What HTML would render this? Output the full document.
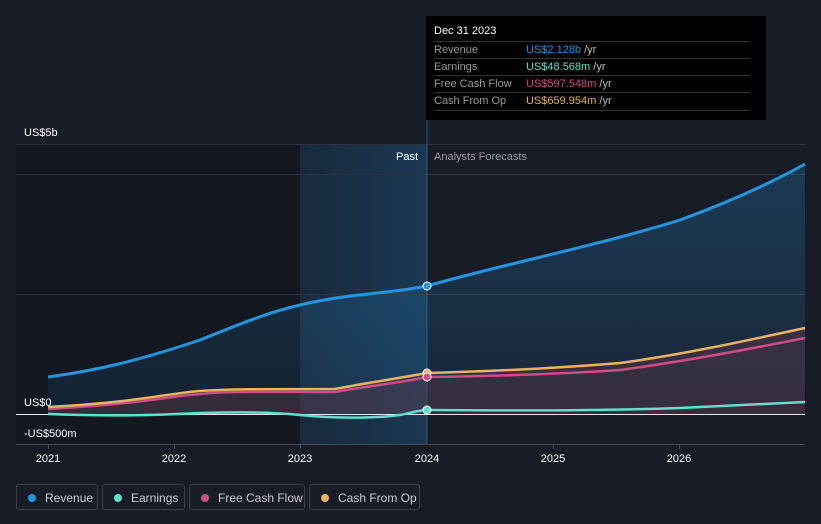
<!DOCTYPE html>
<html><head><style>
body{margin:0;background:#181c27;font-family:"Liberation Sans",sans-serif;}
.wrap{position:relative;width:821px;height:524px;overflow:hidden;background:#181c27;}
svg{position:absolute;left:0;top:0}
.tt{position:absolute;left:426px;top:16px;width:340px;height:104px;background:#000;color:#fff;font-size:11px}
.tt .h{position:absolute;left:8px;top:9px;font-size:11px}
.row{position:absolute;left:8px;width:316px;height:17px;border-top:1px solid #333;line-height:17px;color:#999}
.row span{position:absolute;left:92px}
.row i{font-style:normal;color:#bbb}
.leg{position:absolute;top:484px;height:26px;border:1px solid #3a3f4a;border-radius:3px;color:#ccc;font-size:12px;line-height:26px;box-sizing:border-box}
.leg b{position:absolute;left:11px;top:9px;width:8px;height:8px;border-radius:50%}
.leg span{position:absolute;left:28px}
</style></head><body><div class="wrap">
<svg width="821" height="524">
<defs>
<linearGradient id="pg" x1="0" x2="1"><stop offset="0" stop-color="#182a3d"/><stop offset="1" stop-color="#1a3752"/></linearGradient>
<linearGradient id="ra" x1="0" y1="0" x2="0" y2="1"><stop offset="0" stop-color="#2394df" stop-opacity=".25"/><stop offset="1" stop-color="#2394df" stop-opacity=".08"/></linearGradient>
</defs>
<rect x="16" y="144" width="284" height="300" fill="#13171f"/>
<rect x="300" y="144" width="127" height="300" fill="url(#pg)"/>
<g stroke="#2c313c" stroke-width="1">
<line x1="16" y1="144.5" x2="805" y2="144.5"/>
<line x1="16" y1="174.5" x2="805" y2="174.5"/>
<line x1="16" y1="294.5" x2="805" y2="294.5"/>
<line x1="16" y1="444.5" x2="805" y2="444.5" stroke="#444a55"/>
</g>
<line x1="427" y1="16" x2="427" y2="444" stroke="#2a5478" stroke-width="1"/>
<path d="M48,377 C100,370 140,360 200,340 C250,320 270,312 300,305 C350,293 380,295 427,286 C500,265 600,245 680,220 C740,198 780,178 805,164 L805,414 L48,414Z" fill="url(#ra)"/>
<path d="M48,407 C140,402 200,391 260,389 L335,389 C360,384 400,378 427,373 C500,371 560,368 620,363 C680,355 740,342 805,328 L805,414 L48,414Z" fill="#5a3848" fill-opacity=".45"/>
<line x1="16" y1="414.5" x2="805" y2="414.5" stroke="#e8e8e8" stroke-width="1"/>
<path d="M48,377 C100,370 140,360 200,340 C250,320 270,312 300,305 C350,293 380,295 427,286 C500,265 600,245 680,220 C740,198 780,178 805,164" fill="none" stroke="#2394df" stroke-width="3"/>
<path d="M48,409 C140,404 170,396 200,394 C230,391 260,392 335,392 C360,387 400,383 427,377 C500,376 560,374 620,370 C680,362 740,351 805,338" fill="none" stroke="#d04a86" stroke-width="2.5"/>
<path d="M48,407 C140,402 170,393 200,391 C230,389 260,389 335,389 C360,384 400,378 427,373 C500,371 560,368 620,363 C680,355 740,342 805,328" fill="none" stroke="#e9b260" stroke-width="2.5"/>
<path d="M48,414 C100,416 140,416 200,413 C240,412 270,412 300,415 C330,418 370,419 400,415 C415,412 420,410 427,410 C560,411 620,410 680,408 C740,405 780,403 805,402" fill="none" stroke="#5ee0cd" stroke-width="2.5"/>
<circle cx="427" cy="286" r="4" fill="#2394df" stroke="#fff" stroke-width="1"/>
<circle cx="427" cy="373" r="4" fill="#e9b260" stroke="#fff" stroke-width="1"/>
<circle cx="427" cy="377" r="4" fill="#d04a86" stroke="#fff" stroke-width="1"/>
<circle cx="427" cy="410" r="4" fill="#5ee0cd" stroke="#fff" stroke-width="1"/>
<g font-family="Liberation Sans" font-size="11" fill="#fff">
<text x="24" y="136">US$5b</text>
<text x="24" y="406">US$0</text>
<text x="24" y="437">-US$500m</text>
<text x="418" y="160" text-anchor="end">Past</text>
<text x="434" y="160" fill="#999">Analysts Forecasts</text>
<text x="48" y="462" text-anchor="middle">2021</text>
<text x="174" y="462" text-anchor="middle">2022</text>
<text x="300" y="462" text-anchor="middle">2023</text>
<text x="427" y="462" text-anchor="middle">2024</text>
<text x="553" y="462" text-anchor="middle">2025</text>
<text x="679" y="462" text-anchor="middle">2026</text>
</g>
<g stroke="#444a55"><line x1="48.5" y1="444" x2="48.5" y2="449"/><line x1="174.5" y1="444" x2="174.5" y2="449"/><line x1="300.5" y1="444" x2="300.5" y2="449"/><line x1="553.5" y1="444" x2="553.5" y2="449"/><line x1="679.5" y1="444" x2="679.5" y2="449"/></g>
</svg>
<div class="tt">
<div class="h">Dec 31 2023</div>
<div class="row" style="top:25px">Revenue<span style="color:#2394df">US$2.128b <i>/yr</i></span></div>
<div class="row" style="top:42px">Earnings<span style="color:#5ee0cd">US$48.568m <i>/yr</i></span></div>
<div class="row" style="top:59px">Free Cash Flow<span style="color:#d04a86">US$597.548m <i>/yr</i></span></div>
<div class="row" style="top:76px;border-bottom:1px solid #333">Cash From Op<span style="color:#e9b260">US$659.954m <i>/yr</i></span></div>
</div>
<div class="leg" style="left:16px;width:82px"><b style="background:#2394df"></b><span>Revenue</span></div>
<div class="leg" style="left:102px;width:83px"><b style="background:#5ee0cd"></b><span>Earnings</span></div>
<div class="leg" style="left:189px;width:116px"><b style="background:#d04a86"></b><span>Free Cash Flow</span></div>
<div class="leg" style="left:309px;width:111px"><b style="background:#e9b260"></b><span>Cash From Op</span></div>
</div></body></html>
